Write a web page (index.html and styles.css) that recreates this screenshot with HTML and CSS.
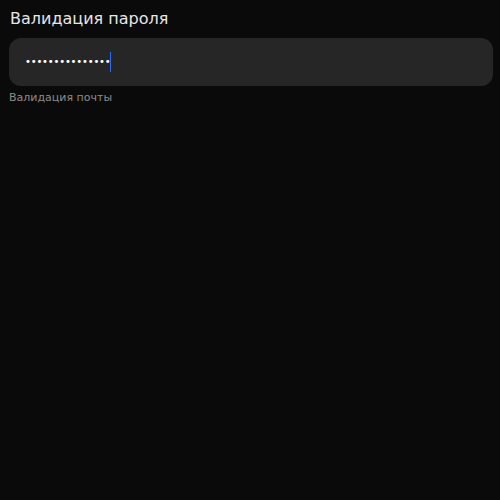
FILE: index.html
```html
<!DOCTYPE html>
<html lang="ru">
<head>
<meta charset="utf-8">
<link rel="stylesheet" href="styles.css">
</head>
<body>
<div class="page">
  <h1 class="title">Валидация пароля</h1>
  <div class="field">
    <span class="dots">•••••••••••••••</span><span class="caret"></span>
  </div>
  <div class="hint">Валидация почты</div>
</div>
</body>
</html>
```
FILE: styles.css
```css
html, body {
  margin: 0;
  padding: 0;
  background: #0a0a0a;
  height: 100%;
}
.page {
  padding: 9px 9px 0 9px;
  font-family: "DejaVu Sans", sans-serif;
  display: flex;
  flex-direction: column;
}
.title {
  margin: 0 0 0 1px;
  font-size: 16px;
  font-weight: normal;
  line-height: 19px;
  color: #e6e6e6;
}
.field {
  margin-top: 10px;
  height: 48px;
  width: 484px;
  box-sizing: border-box;
  background: #262626;
  border-radius: 12px;
  display: flex;
  align-items: center;
  padding-left: 16px;
}
.dots {
  display: inline-block;
  width: 85px;
  overflow: hidden;
  white-space: nowrap;
  font-size: 10px;
  letter-spacing: -0.2px;
  color: #ffffff;
  line-height: 20px;
}
.caret {
  display: inline-block;
  width: 1px;
  height: 20px;
  background: #2a6cff;
}
.hint {
  margin-top: 5px;
  font-size: 11px;
  line-height: 14px;
  color: #8c8c8c;
}
```
